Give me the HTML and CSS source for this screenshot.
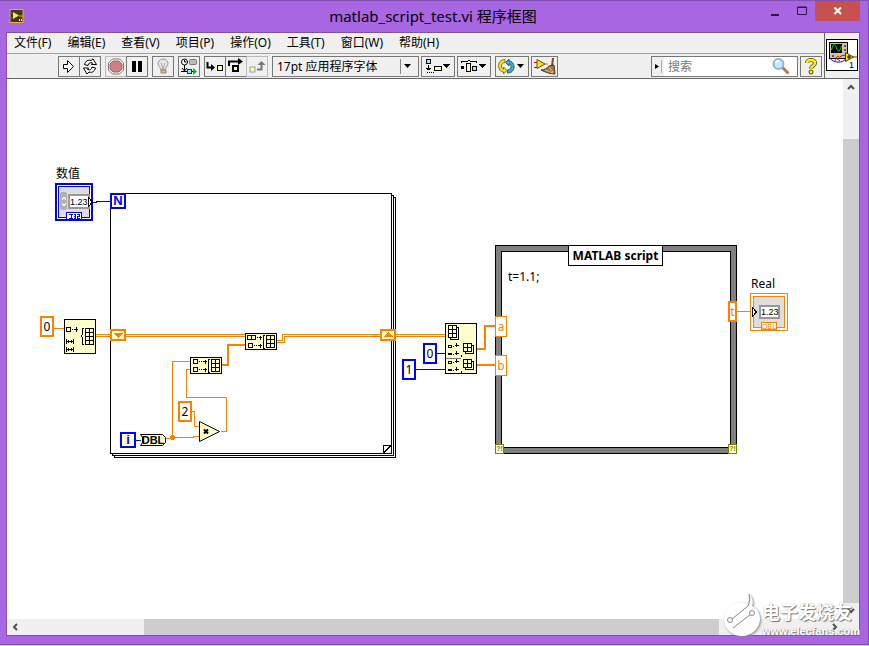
FILE: index.html
```html
<!DOCTYPE html>
<html lang="zh-CN">
<head>
    <meta charset="UTF-8">
    <meta name="viewport" content="width=device-width, initial-scale=1.0">
    <title>matlab_script_test.vi 程序框图</title>
    <link rel="stylesheet" href="styles.css">
</head>
<body>

<div class="window">
    <header class="titlebar">
        <svg class="app-icon" width="16" height="14" viewBox="0 0 16 14">
            <rect x="1" y="0.5" width="13" height="13" fill="#403c22" stroke="#f0b010"/>
            <path d="M0 4h3M0 9h3" stroke="#2a8ac8"/>
            <path d="M4 3v7l6-3.500z" fill="#ffe45a"/>
            <path d="M10 7h6" stroke="#e0b010"/>
            <path d="M10 11h1M12 11h1" stroke="#fff" stroke-width="2"/>
        </svg>
        <h1 class="title">matlab_script_test.vi 程序框图</h1>
        <div class="window-buttons">
            <button class="win-btn" aria-label="最小化"><svg width="10" height="12"><rect x="1" y="9" width="8" height="2" fill="#2b1a3a"/></svg></button>
            <button class="win-btn" aria-label="最大化"><svg width="10" height="12"><path d="M.5 3v6.500h9V2H.5zM0 2.500h10" fill="none" stroke="#2b1a3a"/></svg></button>
            <button class="win-btn close" aria-label="关闭"><svg width="10" height="8"><path d="M1.500 .5l6.500 6.500M8 .5L1.500 7" stroke="#fff" stroke-width="2"/></svg></button>
        </div>
    </header>

    <div class="client">
        <div class="top">
            <div class="bars">
                <nav class="menu">
                    <button>文件(F)</button>
                    <button>编辑(E)</button>
                    <button>查看(V)</button>
                    <button>项目(P)</button>
                    <button>操作(O)</button>
                    <button>工具(T)</button>
                    <button>窗口(W)</button>
                    <button>帮助(H)</button>
                </nav>
                <div class="toolbar">
                    <div class="group">
                        <button class="tool" aria-label="运行"><svg width="18" height="17"><path d="M3.500 6.500h4v-4l6 6-6 6v-4h-4z" fill="#fff" stroke="#000"/></svg></button>
                        <button class="tool" aria-label="连续运行"><svg width="18" height="17"><path d="M3.500 6.500C4.500 3 7 1.500 10 2.500L12 .8l3.500 5.700h-5l1-1.500C9 4 7.500 5 7 7.500zM14.500 10c-1 3.500-3.500 5-6.500 4l-2 2L2.500 10h5l-1 1.500c2.500 1 4 0 4.500-2.500z" fill="#fff" stroke="#000"/></svg></button>
                    </div>
                    <div class="group">
                        <button class="tool off" aria-label="中止"><svg width="18" height="17"><path d="M5.500 1h7l4 4v7l-4 4h-7l-4-4V5z" fill="#fff" stroke="#777"/><path d="M6 3h6l3 3v5l-3 3H6l-3-3V6z" fill="#cd8084" stroke="#a06468"/></svg></button>
                        <button class="tool" aria-label="暂停"><svg width="18" height="17"><path d="M4 3h4v11H4zM10 3h4v11h-4z"/></svg></button>
                    </div>
                    <button class="tool" aria-label="高亮显示"><svg width="18" height="17"><path d="M9 1C5.500 1 4 3.500 4 5.500c0 2.500 2.500 3.500 2.500 6h5c0-2.500 2.500-3.500 2.500-6C14 3.500 12.500 1 9 1z" fill="#e6e6e6" stroke="#999"/><path d="M7 5l2 6 2-6" fill="none" stroke="#aaa"/><path d="M7 12h5v3H7z" fill="#e0c050" stroke="#888"/></svg></button>
                    <button class="tool" aria-label="保存连线值"><svg width="18" height="17"><circle cx="4.500" cy="4" r="3" fill="#fff" stroke="#000"/><path d="M4.500 2v2h2M4.500 7v7M1 13.500h15M2 10l2.500 3L7 10" fill="none" stroke="#000"/><rect x="9.500" y="1.500" width="7" height="5" rx="1" fill="#bbb" stroke="#777"/><rect x="7.500" y="11.500" width="4" height="4" fill="#9ee6ff" stroke="#003c90"/><path d="M13 10l4 3.500-4 3.500z" fill="#00c000"/></svg></button>
                    <div class="group">
                        <button class="tool" aria-label="单步步入"><svg width="18" height="17"><path d="M1.500 4v5.500H6" fill="none" stroke="#000" stroke-width="2"/><path d="M5 6l4 3.500L5 13z"/><rect x="11.500" y="7.500" width="5" height="5" fill="#ffff9c" stroke="#000"/></svg></button>
                        <button class="tool" aria-label="单步步过"><svg width="18" height="17"><path d="M2 8V3.500h10" fill="none" stroke="#000" stroke-width="2"/><path d="M11 0l5 3.500-5 3.500z"/><rect x="6" y="8" width="5" height="5" fill="#ffff9c" stroke="#000" stroke-width="2"/></svg></button>
                        <button class="tool off" aria-label="单步步出"><svg width="18" height="17"><rect x="2" y="9" width="5" height="5" fill="#ffffa8" stroke="#999"/><path d="M9 11.500h4.500V6" fill="none" stroke="#777" stroke-width="2"/><path d="M9.500 7L13.500 3l4 4z" fill="#777"/></svg></button>
                    </div>
                    <div class="group menus">
                        <label class="font-box">
                            <select aria-label="字体">
                                <option>17pt 应用程序字体</option>
                            </select>
                            <svg width="18" height="15"><path d="M.5 0v15" stroke="#888"/><path d="M4 5h7l-3.500 4z"/></svg>
                        </label>
                        <button class="tool wide" aria-label="对齐对象"><svg width="30" height="17" shape-rendering="crispEdges"><rect x="3.500" y="1.500" width="4" height="4" fill="#9ee6ff" stroke="#000"/><path d="M5.500 7v5M3 10h5M4 11.500h3M3.500 14.500h1M6 14.500h1M8 14.500h1M10 14.500h1" stroke="#000" fill="none"/><rect x="11.500" y="8.500" width="7" height="4" fill="#ffffb0" stroke="#000"/><path d="M20 6h7l-3.500 4z"/></svg></button>
                        <button class="tool wide" aria-label="分布对象"><svg width="30" height="17" shape-rendering="crispEdges"><path d="M2.500 5V3.500h6L10 2l1.500 1.500h6V5" stroke="#000" fill="none"/><path d="M2 8h3v3H2z"/><rect x="7.500" y="5.500" width="4" height="8" fill="#ffffb0" stroke="#000"/><rect x="13.500" y="8.500" width="4" height="4" fill="#9ee6ff" stroke="#000"/><path d="M20 6h7l-3.500 4z"/></svg></button>
                    </div>
                    <div class="group pair">
                        <button class="tool wide" aria-label="重新排序"><svg width="30" height="17"><path d="M8 1.500C4 1.500 1.500 4 1.500 7.500S3.500 14 6.500 14v2l3.500-3.500L6.500 9v2C5 11 4.500 9.500 4.500 8S5.500 4.500 8 4.500z" fill="#e8e020" stroke="#807820"/><path d="M10.500 15c4 0 6.500-2.500 6.500-6S15 3 12 3V1L8.500 4.500 12 8V6c1.500 0 2 1 2 2.500S13 12 10.500 12z" fill="#40aac8" stroke="#206078"/><path d="M20 6h7l-3.500 4z"/></svg></button>
                        <button class="tool mid" aria-label="整理程序框图"><svg width="24" height="17"><path d="M1 4.500h3M1 9.500h3" stroke="#d00020"/><path d="M4 1.500v9l8-4.500z" fill="#ffe020" stroke="#605000"/><path d="M12 6h3" stroke="#d07000"/><path d="M19 0h2l-1 8h-2z" fill="#6a4a30"/><path d="M16 8l5-1 1 9c-5 0-10-2-14-4 4 0 6-2 8-4z" fill="#a07840" stroke="#503818"/><path d="M12 12l8 3M16 9l4 5" stroke="#e0c090"/></svg></button>
                    </div>
                    <div class="group pair search">
                        <label class="search-box">
                            <svg width="12" height="15"><path d="M3 5v5l4-2.500z"/><path d="M9.500 1v13" stroke="#aaa"/></svg>
                            <input type="text" placeholder="搜索" aria-label="搜索">
                            <svg width="18" height="19"><path d="M10.500 10.500l6 6" stroke="#b87848" stroke-width="3"/><circle cx="6.500" cy="7" r="5" fill="#c8e8fc" stroke="#8cb4dc" stroke-width="2"/><path d="M4 6c0-1 1-2 3-2" fill="none" stroke="#fff" stroke-width="2"/></svg>
                        </label>
                        <button class="tool" aria-label="帮助"><svg width="18" height="17"><path d="M5 5c0-4 8-4 8 0 0 3-4 3-4 5.500" fill="none" stroke="#504800" stroke-width="4"/><path d="M5 5c0-4 8-4 8 0 0 3-4 3-4 5.500" fill="none" stroke="#ffee00" stroke-width="2.500"/><circle cx="9" cy="14" r="2" fill="#ffee00" stroke="#504800"/></svg></button>
                    </div>
                </div>
            </div>
            <button class="vi-icon" aria-label="VI 图标">
                <svg width="30" height="30" viewBox="0 0 30 30">
                    <g shape-rendering="crispEdges">
                        <rect x="2.500" y="2.500" width="18" height="16" fill="#c8c8a8" stroke="#000"/>
                        <rect x="4" y="4" width="11" height="9" fill="#000"/>
                        <path d="M17 5h2v2h-2zM17 9h2v2h-2zM5 15h2v2H5z" fill="#555"/>
                    </g>
                    <path d="M4.500 10C6 3 8 3 9.500 8s3 4 5-2" fill="none" stroke="#00e020"/>
                    <path d="M3 18c2 5 14 6 16 0" fill="none" stroke="#0020c0"/>
                    <path d="M8 21c3-9 4-2 5-4s3-1 6-2M9 18l4 3M25 17h5" fill="none" stroke="#e00000"/>
                    <path d="M18.500 12.500v9l8-4.500z" fill="#ffe800" stroke="#504000"/>
                    <path d="M20 17h4M22 15v4" stroke="#000"/>
                    <text class="value" x="22" y="28">1</text>
                </svg>
            </button>
        </div>

        <div class="workspace">
            <main class="canvas">
                <svg class="wires" width="836" height="540" viewBox="7 79 836 540" shape-rendering="crispEdges">
                    <!-- for loop frame -->
                    <g fill="#fff" stroke="#000">
                        <rect x="114.500" y="197.500" width="281" height="260"/>
                        <rect x="112.500" y="195.500" width="281" height="260"/>
                        <rect x="110.500" y="193.500" width="281" height="260"/>
                        <path d="M383.500 453v-7.500h8M383 453.500l8.500-8.500"/>
                    </g>

                    <!-- integer wires -->
                    <g fill="none" stroke="#0000ff">
                        <path d="M92 202.500h4v-1h14M136 440.500h5M436 353.500h10M415 369.500h31"/>
                    </g>

                    <!-- double wires -->
                    <g fill="none" stroke="#ff8000">
                        <path d="M54 328.500h10M96 334.500h149M96 336.500h149M277 340.500h5.500v-6H445M277 342.500h7.500v-6H445"/>
                        <path d="M165 438.500h8M172.500 438v-76.500H190M172 437.500h21v-1h6M190 369.500h-3.500v28h40v34h-6M192 411.500h2.500v15h5M737 311.500h14"/>
                        <path d="M222 365h6v-20h17M477 349h8v-23h10M477 365h18" stroke-width="2"/>
                    </g>
                    <circle cx="172.500" cy="437.500" r="2.500" fill="#ff8000"/>

                    <!-- shift registers -->
                    <g fill="#ffffcc" stroke="#ff8000" stroke-width="2">
                        <rect x="111" y="330" width="14" height="10"/>
                        <rect x="381" y="330" width="14" height="10"/>
                    </g>
                    <path d="M113 333h10l-5 5zM383 337h10l-5-5z" fill="#ff8000"/>

                    <!-- initialize array -->
                    <g stroke="#000" fill="#ffffcc">
                        <rect x="64.500" y="319.500" width="31" height="34"/>
                        <rect x="66.500" y="327.500" width="4" height="4"/>
                        <path d="M72 329.500h1M74 329.500h4M76.500 327v5M66.500 339v5M73.500 339v5M67 341.500h6M66.500 347v5M73.500 347v5M67 349.500h6M68.500 340v3M71.500 340v3M68.500 348v3M71.500 348v3"/>
                        <path d="M84 328.500h-1.500v6l-1 1.500 1 1.500v6.500H84" fill="none"/>
                        <path d="M85.500 328.500h8v16h-8zM89.500 328v17M85 332.500h9M85 336.500h9M85 340.500h9"/>
                    </g>

                    <!-- build arrays -->
                    <g stroke="#000" fill="#ffffcc">
                        <rect x="245.500" y="333.500" width="31" height="16"/>
                        <path d="M247.500 335.500h8v4h-8zM251.500 335v5M248.500 343.500h4v4h-4zM257 337.500h1M259 337.500h3M260.500 336v4M254 345.500h1M256 345.500h1M258 345.500h4M260.500 344v4"/>
                        <path d="M264.500 335h-1v13h1" fill="none"/>
                        <path d="M266.500 335.500h8v12h-8zM270.500 335v13M266 339.500h9M266 343.500h9"/>
                        <rect x="190.500" y="357.500" width="31" height="16"/>
                        <path d="M193.500 359.500h4v4h-4zM193.500 367.500h4v4h-4zM199 361.500h1M201 361.500h1M203 361.500h4M205.500 360v4M199 369.500h1M201 369.500h1M203 369.500h4M205.500 368v4"/>
                        <path d="M209.500 359h-1v13h1" fill="none"/>
                        <path d="M211.500 359.500h8v12h-8zM215.500 359v13M211 363.500h9M211 367.500h9"/>
                    </g>

                    <!-- index array -->
                    <g stroke="#000" fill="#ffffcc">
                        <rect x="445.500" y="323.500" width="31" height="50"/>
                        <path d="M450.500 327.500h8v12h-8z"/>
                        <path d="M448.500 325.500h8v12h-8zM452.500 325v13M448 329.500h9M448 333.500h9"/>
                        <path d="M465.500 345.500h8v8h-8z"/>
                        <path d="M463.500 343.500h8v8h-8zM467.500 343v9M463 347.500h9"/>
                        <path d="M465.500 361.500h8v8h-8z"/>
                        <path d="M463.500 359.500h8v8h-8zM467.500 359v9M463 363.500h9"/>
                        <path d="M448.500 345.500h3v2h-3zM448 353.500h4M448 354.500h4M453 346.500h1M455 345.500h4M456.500 343v4M453 354.500h1M455 353.500h4M456.500 351v4"/>
                        <path d="M448.500 361.500h3v2h-3zM448 369.500h4M448 370.500h4M453 362.500h1M455 361.500h4M456.500 359v4M453 370.500h1M455 369.500h4M456.500 367v4M461.500 355v2M461.500 371v2"/>
                        <path d="M446 358.500h15" stroke="#777"/>
                    </g>

                    <!-- to double, multiply -->
                    <g stroke="#000" fill="#ffffcc" shape-rendering="auto">
                        <path d="M140.500 434.500h22l3 3v5l-3 3h-22l2-3v-5z"/>
                        <path d="M199.500 421.500v20l20-10z"/>
                        <path d="M204 429.500l4 4M208 429.500l-4 4" stroke-width="2"/>
                    </g>
                    <text class="tag" x="153" y="444" text-anchor="middle">DBL</text>

                    <!-- numeric control -->
                    <g>
                        <rect x="56" y="184" width="36" height="36" fill="#fff" stroke="#0000ff" stroke-width="2"/>
                        <rect x="58.500" y="186.500" width="31" height="31" fill="#dedede" stroke="#0000ff"/>
                        <rect x="60" y="192" width="7" height="18" rx="3" fill="#b0b0b0"/>
                        <path d="M62 200l2-3 2 3M62 203l2 3 2-3" fill="none" stroke="#f4f4f4"/>
                        <rect x="69" y="195" width="20" height="13" fill="#fff" stroke="#999" stroke-width="2"/>
                        <path d="M88.500 197.500v9l4-4.500z" fill="#fff" stroke="#000"/>
                        <rect x="66.500" y="212.500" width="15" height="7" fill="#fff" stroke="#0000ff"/>
                        <path d="M69 214.500h4M71 214v5M69 218.500h4M74 214.500h2M75.500 214v5M74 216.500h2M74 218.500h2M77 214.500h3M79.500 214v3M77 216.500h3M77.500 216v3M77 218.500h3" stroke="#0000ff"/>
                    </g>
                    <text class="value" x="70" y="205">1.23</text>

                    <!-- numeric indicator -->
                    <g>
                        <rect x="750.500" y="293.500" width="37" height="37" fill="#fff" stroke="#ff8000"/>
                        <rect x="753.500" y="296.500" width="31" height="31" fill="#dedede" stroke="#ff8000"/>
                        <rect x="760" y="306" width="19" height="12" fill="#fff" stroke="#999" stroke-width="2"/>
                        <path d="M752.500 307.500v9l4-4.500z" fill="#fff" stroke="#000"/>
                        <rect x="761.500" y="322.500" width="15" height="7" fill="#fff" stroke="#ff8000"/>
                    </g>
                    <text class="value" x="761" y="315">1.23</text>
                    <text class="type" x="769" y="329" text-anchor="middle">DBL</text>
                </svg>

                <label class="label numeric-label">数值</label>
                <label class="label real-label">Real</label>
                <span class="terminal count">N</span>
                <span class="terminal iteration">i</span>

                <input class="constant dbl zero" value="0" aria-label="初始值">
                <input class="constant dbl two" value="2" aria-label="乘数">
                <input class="constant int index0" value="0" aria-label="索引 0">
                <input class="constant int index1" value="1" aria-label="索引 1">

                <section class="script-node">
                    <h2>MATLAB script</h2>
                    <textarea aria-label="MATLAB script" spellcheck="false">t=1.1;</textarea>
                    <span class="port in-a">a</span>
                    <span class="port in-b">b</span>
                    <span class="port out-t">t</span>
                    <span class="error-port left">?!</span>
                    <span class="error-port right">?!</span>
                </section>
            </main>

            <div class="scroll vertical">
                <button aria-label="向上滚动"><svg width="8" height="6"><path d="M1 5l3-3 3 3" fill="none" stroke="#505050" stroke-width="2"/></svg></button>
                <div class="thumb"></div>
                <button aria-label="向下滚动"><svg width="8" height="6"><path d="M1 1l3 3 3-3" fill="none" stroke="#505050" stroke-width="2"/></svg></button>
            </div>
            <div class="scroll horizontal">
                <button aria-label="向左滚动"><svg width="6" height="8"><path d="M5 1L2 4l3 3" fill="none" stroke="#505050" stroke-width="2"/></svg></button>
                <div class="thumb"></div>
                <button aria-label="向右滚动"><svg width="6" height="8"><path d="M1 1l3 3-3 3" fill="none" stroke="#505050" stroke-width="2"/></svg></button>
            </div>
            <div class="corner"></div>
        </div>
    </div>

    <div class="watermark">
        <svg width="40" height="48" viewBox="0 0 40 48">
            <path d="M27 2c1 4 1 7-1 10C15 7 2 14 2 27c0 10 8 17 18 17s18-8 18-17c0-6-3-11-8-13 2-4 0-9-3-12z" fill="#fff"/>
            <path d="M27 2c1 4 1 8-1 12L10 27M11 36l18-14" fill="none" stroke="#888"/>
            <circle cx="8" cy="28" r="2.500" fill="#fff" stroke="#888"/>
            <circle cx="30" cy="21" r="2.500" fill="#fff" stroke="#888"/>
        </svg>
        <div class="brand">
            <strong>电子发烧友</strong>
            <span>www.elecfans.com</span>
        </div>
    </div>
</div>

</body>
</html>
```
FILE: styles.css
```css
* {
    box-sizing: border-box;
}
body {
    margin: 0;
    font-family: "Noto Sans", "Noto Sans CJK SC", sans-serif;
    font-size: 12px;
    color: #000;
    background-color: #c8c4cc;
}
button, input, select, textarea {
    font: inherit;
    color: inherit;
    margin: 0;
    padding: 0;
    border: none;
    border-radius: 0;
    background: none;
}
svg {
    display: block;
    flex: none;
}
.window {
    position: relative;
    display: flex;
    flex-direction: column;
    height: calc(100vh - 1px);
    min-height: 400px;
    padding: 0 8px 8px 6px;
    background-color: #a866e2;
    border: 1px solid #8250b0;
    border-left: none;
}

/* title bar */
.titlebar {
    display: grid;
    grid-template-columns: 1fr auto 1fr;
    align-items: start;
    height: 31px;
}
.app-icon {
    margin: 8px 0 0 3px;
}
.title {
    margin: 0;
    font-size: 15px;
    font-weight: normal;
    line-height: 30px;
}
.window-buttons {
    display: flex;
    justify-content: flex-end;
}
.win-btn {
    display: flex;
    align-items: center;
    justify-content: center;
    width: 27px;
    height: 20px;
}
.close {
    width: 45px;
    background-color: #c75050;
}

/* menu and toolbar */
.client {
    flex: 1;
    display: flex;
    flex-direction: column;
    min-height: 0;
    border: 1px solid #8250b0;
    background-color: #f0f0f0;
}
.top {
    display: flex;
    border-bottom: 1px solid #666;
}
.bars {
    flex: 1;
    min-width: 0;
    border-right: 1px solid #666;
}
.menu {
    display: flex;
    gap: 16px;
    height: 21px;
    padding-left: 7px;
    border-bottom: 1px solid #a0a0a0;
}
.menu button {
    line-height: 18px;
    white-space: nowrap;
}
.toolbar {
    display: flex;
    align-items: center;
    gap: 4px;
    height: 24px;
    padding: 0 2px 0 51px;
}
.group {
    display: flex;
}
.group .tool + .tool {
    margin-left: -1px;
}
.menus, .pair {
    gap: 2px;
}
.menus .tool + .tool, .pair .tool + .tool {
    margin-left: 0;
}
.tool {
    display: flex;
    flex: none;
    align-items: center;
    justify-content: center;
    width: 22px;
    height: 21px;
    border: 1px solid #777;
}
.off {
    border-color: #bbb;
}
.wide {
    width: 34px;
}
.mid {
    width: 27px;
}
.font-box {
    display: flex;
    align-items: center;
    width: 147px;
    height: 21px;
    padding-left: 4px;
    border: 1px solid #777;
}
.font-box select {
    flex: 1;
    min-width: 0;
    appearance: none;
}
.search {
    margin-left: auto;
}
.search-box {
    display: flex;
    align-items: center;
    width: 147px;
    height: 21px;
    border: 1px solid #777;
    background: linear-gradient(to right, #f0f0f0 12px, #fff 12px);
}
.search-box input {
    flex: 1;
    min-width: 0;
    height: 19px;
    padding-left: 4px;
    outline: none;
}
.search-box svg:last-child {
    margin-right: 7px;
}
.search-box input::placeholder {
    color: #777;
    opacity: 1;
}
.vi-icon {
    align-self: flex-end;
    margin: 0 1px 7px 1px;
    border: 1px solid #000;
    background-color: #fff;
}

/* block diagram */
.workspace {
    flex: 1;
    display: grid;
    grid-template-columns: 1fr 16px;
    grid-template-rows: 1fr 16px;
    min-height: 0;
}
.canvas {
    position: relative;
    overflow: hidden;
    background-color: #fff;
}
.wires {
    position: absolute;
    top: 0;
    left: 0;
}
.tag {
    font: bold 11px "Liberation Sans", sans-serif;
}
.value {
    font: 9px "Liberation Sans", sans-serif;
}
.type {
    font: 7px "DejaVu Sans", sans-serif;
    fill: #ff8000;
}
.label {
    position: absolute;
    line-height: 16px;
}
.numeric-label {
    left: 49px;
    top: 87px;
}
.real-label {
    left: 744px;
    top: 197px;
}
.terminal {
    position: absolute;
    width: 16px;
    height: 16px;
    border: 2px solid #0000ff;
    background-color: #ffffcc;
    color: #0000ff;
    font: bold 13px/12px "Liberation Sans", sans-serif;
    text-align: center;
}
.count {
    left: 103px;
    top: 114px;
}
.iteration {
    left: 113px;
    top: 353px;
}
.constant {
    position: absolute;
    width: 14px;
    height: 21px;
    border: 2px solid #ff8000;
    background-color: #fff;
    text-align: center;
}
.int {
    border-color: #0000ff;
}
.zero {
    left: 33px;
    top: 237px;
}
.two {
    left: 171px;
    top: 322px;
}
.index0 {
    left: 416px;
    top: 264px;
}
.index1 {
    left: 395px;
    top: 280px;
}
.script-node {
    position: absolute;
    left: 488px;
    top: 166px;
    width: 242px;
    height: 209px;
    padding: 5px;
    border: 1px solid #000;
    background-color: #808080;
}
.script-node h2 {
    position: absolute;
    left: 72px;
    top: -1px;
    width: 95px;
    height: 21px;
    margin: 0;
    border: 1px solid #000;
    background-color: #fff;
    font-size: 12px;
    line-height: 19px;
    text-align: center;
    white-space: nowrap;
}
.script-node textarea {
    display: block;
    width: 100%;
    height: 100%;
    padding: 17px 6px;
    border: 1px solid #000;
    background-color: #fff;
    line-height: 16px;
    resize: none;
    outline: none;
}
.port {
    position: absolute;
    left: -1px;
    width: 12px;
    height: 21px;
    border: 1px solid #ff8000;
    background-color: #fff;
    color: #ff8000;
    line-height: 19px;
    text-align: center;
}
.in-a {
    top: 70px;
}
.in-b {
    top: 109px;
}
.out-t {
    left: auto;
    right: -1px;
    top: 55px;
    width: 9px;
    border-width: 2px;
    line-height: 17px;
}
.error-port {
    position: absolute;
    bottom: -1px;
    width: 9px;
    height: 10px;
    border: 1px solid #808000;
    background-color: #ffffcc;
    color: #808000;
    font: bold 7px/8px "Liberation Sans", sans-serif;
    text-align: center;
}
.left {
    left: -1px;
}
.right {
    right: -1px;
}

/* scroll bars */
.scroll {
    display: flex;
    background-color: #f0f0f0;
}
.scroll button {
    display: flex;
    align-items: center;
    justify-content: center;
    width: 16px;
    height: 16px;
}
.thumb {
    background-color: #cdcdcd;
}
.vertical {
    flex-direction: column;
}
.vertical .thumb {
    flex: 1;
    margin-top: 44px;
}
.horizontal .thumb {
    flex: 1;
    margin: 0 108px 0 121px;
}

/* watermark */
.watermark {
    position: absolute;
    right: 8px;
    bottom: 4px;
    display: flex;
    align-items: flex-end;
    color: #fff;
    pointer-events: none;
}
.watermark svg {
    filter: drop-shadow(1px 1px 1px #888);
}
.brand {
    display: flex;
    flex-direction: column;
    padding-bottom: 3px;
    text-shadow: 1px 1px 1px #777, 0 0 1px #999;
}
.brand strong {
    font-size: 18px;
    line-height: 26px;
}
.brand span {
    font: bold 11px/12px "Liberation Sans", sans-serif;
}
```
